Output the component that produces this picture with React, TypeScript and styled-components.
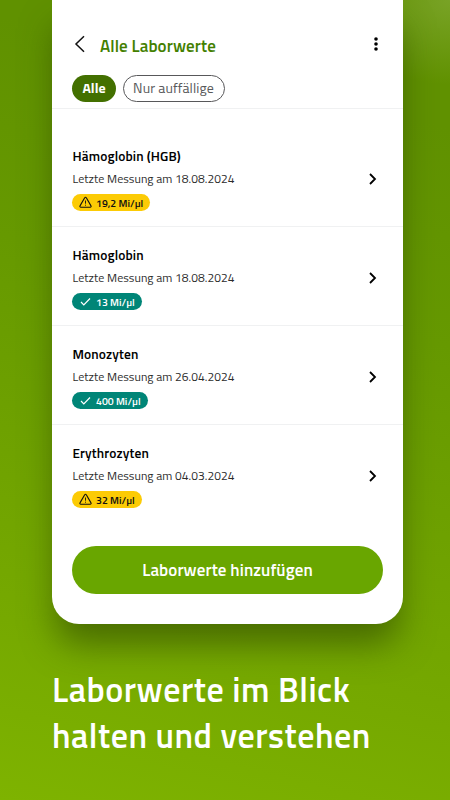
import React from "react";
import styled, { createGlobalStyle } from "styled-components";

const GlobalStyle = createGlobalStyle`
  * { box-sizing: border-box; }
  body { margin: 0; }
`;

const fontStack = `"Titillium Web", Roboto, "Noto Sans", sans-serif`;

const Page = styled.main`
  width: 450px;
  height: 800px;
  overflow: hidden;
  display: flex;
  flex-direction: column;
  font-family: ${fontStack};
  background:
    radial-gradient(ellipse 110px 85px at 450px 0, rgba(145, 180, 75, 0.5), transparent),
    linear-gradient(194deg, #609100 14%, #669900 38%, #76a900 80%, #7eb300 100%);
`;

const Card = styled.section`
  width: 351px;
  height: 624px;
  flex: none;
  margin-left: 52px;
  background: #fff;
  border-radius: 0 0 27px 27px;
  box-shadow: 0 24px 34px -4px rgba(44, 68, 0, 0.6);
  display: flex;
  flex-direction: column;
`;

const Header = styled.header`
  height: 109px;
  flex: none;
  padding: 32px 20px 0;
  border-bottom: 1px solid #f0f1f2;
`;

const TitleBar = styled.div`
  height: 27px;
  display: flex;
  align-items: center;
`;

const BackIcon = styled.svg`
  width: 12px;
  height: 18px;
  margin: -3px 14px 0 2px;
`;

const MoreIcon = styled.svg`
  width: 6px;
  height: 16px;
  margin: -3px 4px 0 auto;
`;

const Title = styled.h1`
  margin: 0;
  padding-top: 1px;
  font-size: 17px;
  font-weight: 600;
  letter-spacing: 0.08px;
  color: #438000;
  white-space: nowrap;
`;

const Chips = styled.div`
  display: flex;
  gap: 6.5px;
  margin-top: 15.5px;
`;

const Chip = styled.button<{ $active?: boolean }>`
  width: ${(p) => (p.$active ? 44 : 102)}px;
  height: 27.5px;
  padding: 0;
  border: ${(p) => (p.$active ? "0" : "1.5px solid #58585a")};
  border-radius: 14px;
  background: ${(p) => (p.$active ? "#437000" : "#fff")};
  color: ${(p) => (p.$active ? "#fff" : "#58585a")};
  font-family: ${fontStack};
  font-weight: ${(p) => (p.$active ? 700 : 400)};
  font-size: 14px;
  line-height: 24px;
  letter-spacing: ${(p) => (p.$active ? 0 : 0.1)}px;
  white-space: nowrap;
`;

const List = styled.ul`
  list-style: none;
  margin: 19px 0 0;
  padding: 0;
`;

const Row = styled.li`
  height: 99.1px;
  padding: 17px 25px 0 20.5px;
  display: flex;
  justify-content: space-between;
  border-bottom: 1px solid #f0f1f2;
  &:last-child { border-bottom: 0; }
`;

const RowTitle = styled.h2`
  margin: 0;
  font-size: 13.5px;
  line-height: 22px;
  font-weight: 600;
  letter-spacing: 0.12px;
  color: #000;
`;

const Measured = styled.p`
  margin: 0;
  font-size: 12px;
  line-height: 23px;
  font-weight: 400;
  letter-spacing: 0.04px;
  color: #2c2c2c;
`;

const Badge = styled.span<{ $warn: boolean; $width: number }>`
  width: ${(p) => p.$width}px;
  height: 17px;
  margin: 4px 0 0 -0.5px;
  padding-left: 7px;
  display: flex;
  align-items: center;
  gap: 4px;
  border-radius: 9px;
  background: ${(p) => (p.$warn ? "#fccb05" : "#008577")};
  color: ${(p) => (p.$warn ? "#111" : "#fff")};
  font-size: 10.5px;
  font-weight: 600;
  white-space: nowrap;
`;

const BadgeIcon = styled.svg`
  width: 13px;
  height: 13px;
  flex: none;
`;

const Chevron = styled.svg`
  width: 10px;
  height: 14px;
  margin-top: 27px;
`;

const AddButton = styled.button`
  width: 311px;
  height: 48px;
  margin: 21.5px 0 0 20px;
  padding: 0;
  border: 0;
  border-radius: 24px;
  background: #69a600;
  color: #fff;
  font: 600 17px/48px ${fontStack};
  letter-spacing: 0.08px;
`;

const Headline = styled.p`
  margin: 41.5px 0 0 52px;
  color: #fff;
  font-size: 34px;
  line-height: 46px;
  font-weight: 600;
  letter-spacing: 0.52px;
  white-space: nowrap;
`;

const values = [
  { name: "Hämoglobin (HGB)", date: "18.08.2024", value: "19,2 Mi/µl", warn: true, width: 77.5 },
  { name: "Hämoglobin", date: "18.08.2024", value: "13 Mi/µl", warn: false, width: 70 },
  { name: "Monozyten", date: "26.04.2024", value: "400 Mi/µl", warn: false, width: 75.5 },
  { name: "Erythrozyten", date: "04.03.2024", value: "32 Mi/µl", warn: true, width: 70 },
];

export default function App() {
  return (
    <Page>
      <GlobalStyle />
      <Card>
        <Header>
          <TitleBar>
            <BackIcon viewBox="0 0 12 18" fill="none" stroke="#111" strokeWidth="1.5">
              <path d="M10 1.2 2 9l8 7.8" />
            </BackIcon>
            <Title>Alle Laborwerte</Title>
            <MoreIcon viewBox="0 0 6 16" fill="#000">
              <circle cx="3" cy="3" r="1.8" />
              <circle cx="3" cy="8" r="1.8" />
              <circle cx="3" cy="13" r="1.8" />
            </MoreIcon>
          </TitleBar>
          <Chips>
            <Chip $active>Alle</Chip>
            <Chip>Nur auffällige</Chip>
          </Chips>
        </Header>
        <List>
          {values.map((v) => (
            <Row key={v.name}>
              <div>
                <RowTitle>{v.name}</RowTitle>
                <Measured>Letzte Messung am {v.date}</Measured>
                <Badge $warn={v.warn} $width={v.width}>
                  <BadgeIcon viewBox="0 0 13 13" fill="none" stroke="currentColor">
                    {v.warn ? (
                      <>
                        <path d="M5.7 1.8a.9.9 0 0 1 1.6 0l4.7 8.1a.9.9 0 0 1-.8 1.4H1.8A.9.9 0 0 1 1 9.9Z" strokeWidth="1.1" />
                        <path d="M6.5 4.5v3.2M6.5 8.7v1" strokeWidth="0.9" />
                      </>
                    ) : (
                      <path d="m2 7 2.8 2.8L11 3.5" strokeWidth="1.2" />
                    )}
                  </BadgeIcon>
                  {v.value}
                </Badge>
              </div>
              <Chevron viewBox="0 0 10 14" fill="none" stroke="#000" strokeWidth="1.8">
                <path d="m2 2 5 5-5 5" />
              </Chevron>
            </Row>
          ))}
        </List>
        <AddButton>Laborwerte hinzufügen</AddButton>
      </Card>
      <Headline>
        Laborwerte im Blick
        <br />
        halten und verstehen
      </Headline>
    </Page>
  );
}
